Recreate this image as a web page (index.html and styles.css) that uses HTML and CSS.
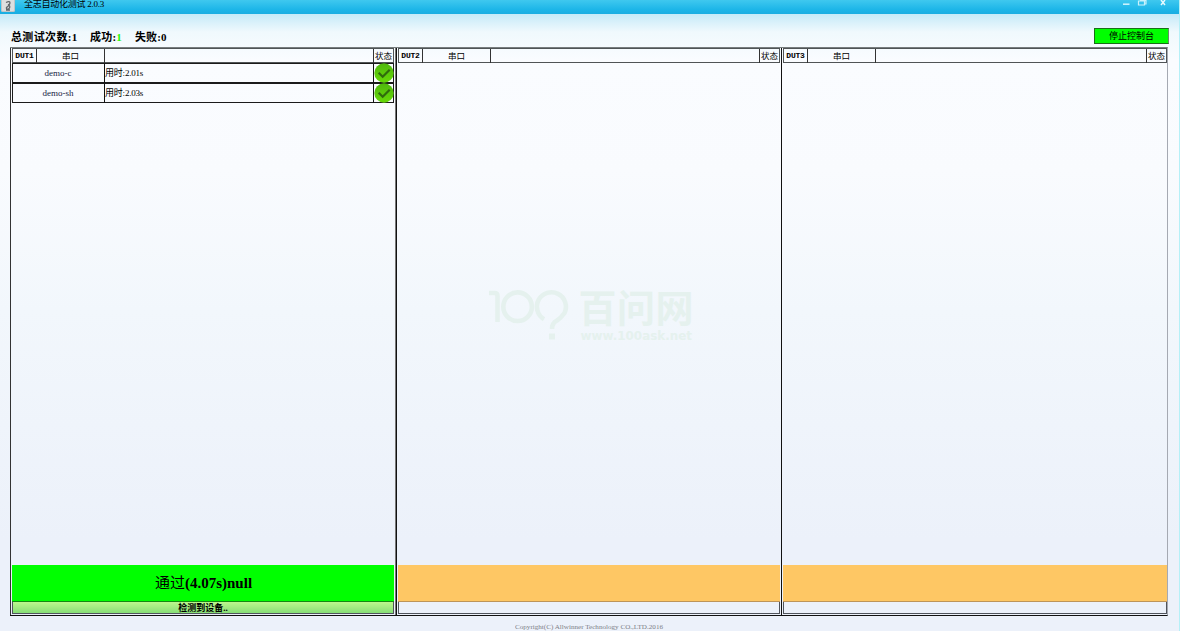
FILE: index.html
```html
<!DOCTYPE html>
<html lang="zh-CN">
<head>
<meta charset="utf-8">
<title>全志自动化测试 2.0.3</title>
<link rel="stylesheet" href="styles.css">
</head>
<body>
<div class="window">
  <header class="titlebar">
    <svg class="app-icon" width="15" height="13" viewBox="0 0 15 13"><rect x="0" y="-3" width="14" height="15" rx="1.500" fill="#c0c5c8"/><rect x="1" y="-2" width="12" height="13" rx="1" fill="#dddfe0"/><path d="M5 2.500Q9 .5 9 3Q9 4.500 7 5Q9.500 5.500 8.500 8L7 9.500Q5 9 5.500 7.500L7.500 6M5 10h4" fill="none" stroke="#62676b" stroke-width="1.300"/></svg>
    <span class="title">全志自动化测试 2.0.3</span>
    <svg class="controls" width="60" height="10" viewBox="0 0 60 10"><path d="M3 4.200h6.500" stroke="#c9f2fc" stroke-width="1.600"/><path d="M20.500 0v.5h5.500V4h-1.500M18.500 1h6v4h-6z" fill="none" stroke="#c9f2fc" stroke-width="1.200"/><path d="M41 0l4 5M45 0l-4 5" stroke="#e6faff" stroke-width="1.500"/></svg>
  </header>
  <div class="summary">
    <div class="stats"><span class="total">总测试次数:1</span><span class="success">成功:<b class="ok">1</b></span><span class="failed">失败:0</span></div>
    <button class="stop">停止控制台</button>
  </div>
  <main class="panels">
    <section class="panel first">
      <div class="head"><b class="dut">DUT1</b><span>串口</span><span></span><span class="state">状态</span></div>
      <div class="rows">
        <div class="row"><span class="name">demo-c</span><span class="time">用时:2.01s</span><span><svg class="check" width="20" height="20" viewBox="0 0 20 20"><circle cx="10" cy="10" r="9.700" fill="url(#g)"/><path d="M4.700 9.700l4 4 7-7" fill="none" stroke="#2f6b0c" stroke-width="2.200"/></svg></span></div>
        <div class="row"><span class="name">demo-sh</span><span class="time">用时:2.03s</span><span><svg class="check" width="20" height="20" viewBox="0 0 20 20"><defs><linearGradient id="g" x2="0" y2="1"><stop stop-color="#4fb80d"/><stop offset="1" stop-color="#66d808"/></linearGradient></defs><circle cx="10" cy="10" r="9.700" fill="url(#g)"/><path d="M4.700 9.700l4 4 7-7" fill="none" stroke="#2f6b0c" stroke-width="2.200"/></svg></span></div>
      </div>
      <div class="result pass"><span class="verdict">通过</span>(4.07s)null</div>
      <div class="progress done">检测到设备..</div>
    </section>
    <section class="panel second">
      <div class="head"><b class="dut">DUT2</b><span>串口</span><span></span><span class="state">状态</span></div>
      <div class="rows"></div>
      <div class="result"></div>
      <div class="progress"></div>
    </section>
    <section class="panel third">
      <div class="head"><b class="dut">DUT3</b><span>串口</span><span></span><span class="state">状态</span></div>
      <div class="rows"></div>
      <div class="result"></div>
      <div class="progress"></div>
    </section>
  </main>
  <footer class="copyright"><svg width="150" height="12"><text x="0" y="9" textLength="148" lengthAdjust="spacingAndGlyphs">Copyright(C) Allwinner Technology CO.,LTD.2016</text></svg></footer>
  <svg class="watermark" width="210" height="56" viewBox="0 0 210 56">
    <g fill="none" stroke="#e5f1ee" stroke-width="4.600">
      <path d="M1 5h5.500q3 0 3 3v26"/>
      <circle cx="29.600" cy="18.700" r="14.300"/>
      <path d="M56 31.200A14.500 14.500 0 1 1 76.500 25Q73 30 69 32.500Q64 35 64 41"/>
    </g>
    <rect x="61" y="45.500" width="6" height="6" fill="#e5f1ee"/>
    <text class="brand" x="90.500" y="34" textLength="115">百问网</text>
    <text class="site" x="92.500" y="51.500" textLength="111.500" lengthAdjust="spacingAndGlyphs">www.100ask.net</text>
  </svg>
</div>
</body>
</html>
```
FILE: styles.css
```css
* { box-sizing: border-box; }
body {
  margin: 0;
  font-family: "Liberation Serif", "Noto Sans CJK SC", serif;
  color: #000;
}
.window {
  position: relative;
  display: flex;
  flex-direction: column;
  width: 1180px;
  height: 631px;
  overflow: hidden;
  border-right: 1px solid #b5f0f7;
  background: linear-gradient(#c5eaf8 14px, #f0f9fd 32px, #fafcff 60px, #f9fbfe 170px, #f2f7fc 310px, #ecf1fa 540px, #ecf1fa);
}
.titlebar {
  display: flex;
  flex: 0 0 14px;
  padding-left: 1px;
  background: linear-gradient(#3fc8ef, #1cb5e8 70%, #1aade1);
  overflow: hidden;
}
.title {
  margin: -2px auto 0 8px;
  font-size: 9px;
  letter-spacing: -.25px;
  line-height: 13px;
  white-space: nowrap;
}
.controls { margin-right: -1px; }
.summary {
  display: flex;
  flex: 0 0 33px;
  justify-content: space-between;
  padding: 14px 11px 0;
}
.stats {
  display: flex;
  padding-top: 1px;
  font-size: 11px;
  font-weight: bold;
  line-height: 17px;
  white-space: nowrap;
}
.total { width: 79px; letter-spacing: .35px; }
.success { width: 45px; letter-spacing: .2px; }
.failed { letter-spacing: .1px; }
.ok { color: #23f500; }
.stop {
  width: 75px;
  height: 16px;
  margin-right: -1px;
  padding: 0;
  border: 1px solid #186f18;
  border-right-color: #698a69;
  background: #0f0;
  font: 9px/12px "Noto Sans CJK SC", sans-serif;
  color: #000;
}
.panels {
  display: grid;
  grid-template-columns: 386px 385px 386px;
  flex: 0 0 569px;
  width: 1158px;
  margin-left: 10px;
  border-top: 1px solid #777d7e;
  border-bottom: 1px solid #111;
  border-right: 1px solid #a5a9b2;
}
.panel {
  display: flex;
  flex-direction: column;
  padding: 1px;
  border-left: 1px solid #333;
}
.panel.second, .panel.third { border-left: 1px solid #111; }
.panel.third { padding-right: 0; }
.panel.first { border-right: 1px solid #777; }
.head {
  display: grid;
  grid-template-columns: 23px 68px 1fr 20px;
  height: 15px;
  border: 1px solid #505456;
  margin-top: -1px;
  font-size: 8.500px;
  line-height: 14px;
  text-align: center;
}
.head > * { white-space: nowrap; }
.head > * + * { border-left: 1px solid #333; }
.head .dut {
  font-family: "Liberation Mono", monospace;
  font-size: 8px;
  letter-spacing: -.2px;
}
.rows { flex: 1; }
.row {
  display: grid;
  grid-template-columns: 91px 1fr 20px;
  height: 20px;
  border: 1px solid #1b1b1b;
  font-size: 9px;
  line-height: 18px;
}
.row > * + * { border-left: 1px solid #111; }
.name { padding-right: 1px; text-align: center; color: #182444; }
.time { letter-spacing: -.2px; white-space: nowrap; }
.check { display: block; margin: -1px 0 0; }
.result {
  height: 37px;
  border-bottom: 1px solid #bd9459;
  background: #fec764;
}
.result.pass {
  border-color: #168616;
  background: #0f0;
  font-size: 15px;
  font-weight: bold;
  line-height: 37px;
  text-align: center;
  padding-left: 1px;
}
.verdict { font-weight: 400; }
.progress {
  height: 12px;
  border: solid #50545c;
  border-width: 0 1px 1px;
}
.progress.done {
  background: linear-gradient(#bcf78d, #87df77);
  font-size: 9px;
  font-weight: bold;
  line-height: 12px;
  text-align: center;
}
.copyright {
  display: flex;
  justify-content: center;
  padding-top: 4px;
}
.copyright text {
  font-family: "Liberation Serif", serif;
  font-size: 7px;
  fill: #7c8087;
}
.watermark {
  position: absolute;
  left: 488px;
  top: 288px;
}
.watermark text { fill: #e5f1ee; }
.brand { font: bold 38px "Noto Sans CJK SC", sans-serif; }
.site { font: bold 12px "DejaVu Sans", sans-serif; }
```
